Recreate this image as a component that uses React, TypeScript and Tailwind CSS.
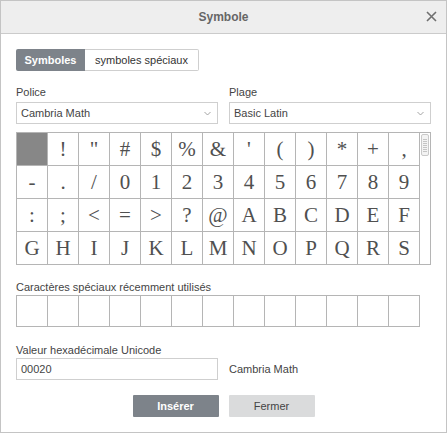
import React from "react";

const rows = [
  [" ", "!", '"', "#", "$", "%", "&", "'", "(", ")", "*", "+", ","],
  ["-", ".", "/", "0", "1", "2", "3", "4", "5", "6", "7", "8", "9"],
  [":", ";", "<", "=", ">", "?", "@", "A", "B", "C", "D", "E", "F"],
  ["G", "H", "I", "J", "K", "L", "M", "N", "O", "P", "Q", "R", "S"],
];

function Chevron() {
  return (
    <svg width="7" height="5" viewBox="0 0 7 5" className="shrink-0">
      <path d="M0.5 1 L3.5 4 L6.5 1" fill="none" stroke="#9a9a9a" strokeWidth="0.9" />
    </svg>
  );
}

function Select({ value }: { value: string }) {
  return (
    <div className="flex h-[22px] w-[202px] items-center justify-between border border-[#cfcfcf] bg-white pl-[4px] pr-[6px] text-[11px] text-[#444]">
      <span>{value}</span>
      <Chevron />
    </div>
  );
}

export default function App() {
  return (
    <div
      className="flex h-[433px] w-[447px] flex-col border border-[#c4c4c4] bg-white text-[11px] text-[#444]"
      style={{ fontFamily: '"Liberation Sans", Arial, sans-serif' }}
    >
      {/* Header */}
      <div className="relative flex h-[33px] shrink-0 items-center justify-center border-b border-[#cbcbcb] bg-[#eeeeee]">
        <span className="text-[12px] font-bold text-[#666]">Symbole</span>
        <svg
          className="absolute right-[9px] top-[10px]"
          width="11"
          height="11"
          viewBox="0 0 11 11"
        >
          <path d="M1 1 L10 10 M10 1 L1 10" stroke="#6f6f6f" strokeWidth="1.6" />
        </svg>
      </div>

      <div className="flex flex-col px-[15px]">
        {/* Tabs */}
        <div className="mt-[15px] flex h-[22px]">
          <div className="flex w-[69px] items-center justify-center rounded-l-[2px] bg-[#7d838a] font-bold text-white">
            Symboles
          </div>
          <div className="flex w-[114px] items-center justify-center rounded-r-[2px] border border-l-0 border-[#cfcfcf] text-[#333]">
            symboles spéciaux
          </div>
        </div>

        {/* Selects */}
        <div className="mt-[15px] flex gap-[11px]">
          <div className="flex flex-col">
            <span className="mb-[3px] h-[13px] leading-[13px]">Police</span>
            <Select value="Cambria Math" />
          </div>
          <div className="flex flex-col">
            <span className="mb-[3px] h-[13px] leading-[13px]">Plage</span>
            <Select value="Basic Latin" />
          </div>
        </div>

        {/* Grid */}
        <div className="mt-[8px] flex">
          <div className="border-l border-t border-[#b5b5b5]">
            {rows.map((r, i) => (
              <div key={i} className="flex">
                {r.map((c, j) => (
                  <div
                    key={j}
                    className={`flex h-[33px] w-[31px] items-center justify-center border-b border-r border-[#b5b5b5] text-[21px] leading-none text-[#505050] ${
                      i === 0 && j === 0 ? "bg-[#878787]" : ""
                    }`}
                    style={{ fontFamily: '"Liberation Serif", "DejaVu Serif", serif' }}
                  >
                    {c}
                  </div>
                ))}
              </div>
            ))}
          </div>
          <div className="flex w-[12px] flex-col border-r border-t border-b border-[#b5b5b5] pt-[1px]">
            <div className="ml-[1px] flex h-[22px] w-[8px] flex-col items-center justify-center gap-[1px] rounded-[2px] border border-[#c9c9c9] bg-[#f3f3f3]">
              {[0, 1, 2, 3, 4, 5, 6].map((k) => (
                <div key={k} className="h-[1px] w-[4px] bg-[#c4c4c4]" />
              ))}
            </div>
          </div>
        </div>

        {/* Recent */}
        <span className="mt-[16px] h-[13px] leading-[13px]">Caractères spéciaux récemment utilisés</span>
        <div className="mt-[1px] flex w-fit border-l border-t border-[#b5b5b5]">
          {Array.from({ length: 13 }).map((_, k) => (
            <div key={k} className="h-[31px] w-[31px] border-b border-r border-[#b5b5b5]" />
          ))}
        </div>

        {/* Hex */}
        <span className="mt-[17px] h-[13px] leading-[13px]">Valeur hexadécimale Unicode</span>
        <div className="mt-[1px] flex items-center gap-[11px]">
          <div className="flex h-[22px] w-[202px] items-center border border-[#cfcfcf] pl-[4px]">00020</div>
          <span>Cambria Math</span>
        </div>

        {/* Buttons */}
        <div className="mt-[15px] flex justify-center gap-[10px]">
          <div className="flex h-[22px] w-[86px] items-center justify-center rounded-[1px] bg-[#7d838a] font-bold text-white">
            Insérer
          </div>
          <div className="flex h-[22px] w-[86px] items-center justify-center rounded-[1px] bg-[#dadbdc] text-[#444]">
            Fermer
          </div>
        </div>
      </div>
    </div>
  );
}
